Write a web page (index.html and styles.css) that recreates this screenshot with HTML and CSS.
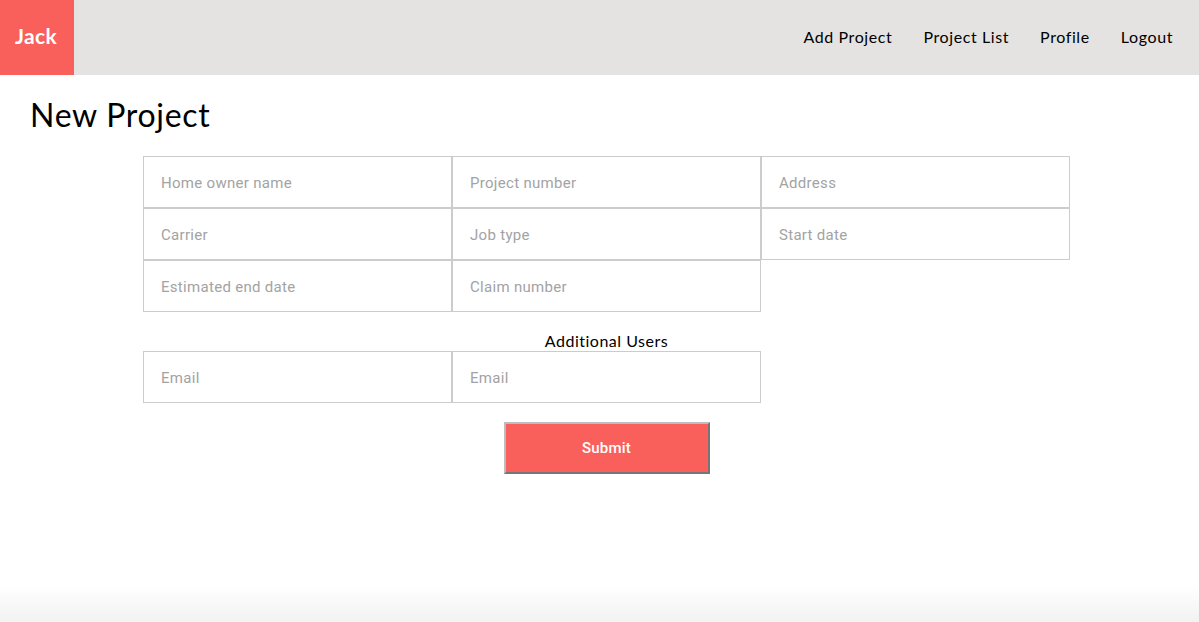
FILE: index.html
```html
<!DOCTYPE html>
<html lang="en">
<head>
<meta charset="utf-8">
<title>New Project</title>
<link rel="stylesheet" href="styles.css">
</head>
<body>
<header class="topbar">
  <div class="brand">Jack</div>
  <nav class="nav">
    <a href="#" class="nav-link">Add Project</a>
    <a href="#" class="nav-link">Project List</a>
    <a href="#" class="nav-link">Profile</a>
    <a href="#" class="nav-link">Logout</a>
  </nav>
</header>
<main class="main">
  <h1 class="title">New Project</h1>
  <form class="form">
    <div class="fields">
      <input class="field" type="text" placeholder="Home owner name">
      <input class="field" type="text" placeholder="Project number">
      <input class="field" type="text" placeholder="Address">
      <input class="field" type="text" placeholder="Carrier">
      <input class="field" type="text" placeholder="Job type">
      <input class="field" type="text" placeholder="Start date">
      <input class="field" type="text" placeholder="Estimated end date">
      <input class="field" type="text" placeholder="Claim number">
    </div>
    <div class="section-label">Additional Users</div>
    <div class="fields">
      <input class="field" type="email" placeholder="Email">
      <input class="field" type="email" placeholder="Email">
    </div>
    <div class="actions">
      <button class="submit" type="button">Submit</button>
    </div>
  </form>
</main>
<div class="fade"></div>
</body>
</html>
```
FILE: styles.css
```css
html, body {
  margin: 0;
  padding: 0;
  height: 100%;
}
body {
  font-family: Lato, "Open Sans", sans-serif;
  color: #000;
  background: #fff;
  position: relative;
  overflow: hidden;
}
.topbar {
  display: flex;
  align-items: stretch;
  height: 75px;
  background: #e5e3e1;
}
.brand {
  width: 74px;
  background: #f95f5b;
  color: #fff;
  font-size: 21px;
  font-weight: 700;
  letter-spacing: 0.3px;
  display: flex;
  align-items: center;
  justify-content: center;
  padding: 0 2px 4px 0;
  box-sizing: border-box;
}
.nav {
  margin-left: auto;
  display: flex;
  align-items: center;
  gap: 31px;
  padding-right: 26px;
  padding-bottom: 3px;
}
.nav-link {
  color: #000;
  text-decoration: none;
  font-size: 16px;
  letter-spacing: 0.6px;
}
.title {
  margin: 0;
  padding: 20px 0 0 30px;
  font-size: 32px;
  font-weight: 400;
  line-height: 40px;
  letter-spacing: 0.7px;
}
.form {
  width: 927px;
  margin: 21px 0 0 143px;
}
.fields {
  display: grid;
  grid-template-columns: 309px 309px 309px;
}
.field {
  height: 52px;
  box-sizing: border-box;
  border: 1px solid #cccccc;
  margin: 0;
  padding: 2px 16px 0 17px;
  font-family: Roboto, "Liberation Sans", sans-serif;
  font-size: 15px;
  letter-spacing: 0.3px;
  color: #333;
  outline: none;
  background: #fff;
}
.field::placeholder {
  color: #a3a3a3;
}
.section-label {
  text-align: center;
  font-size: 16px;
  letter-spacing: 0.5px;
  margin-top: 20px;
  line-height: 18px;
  padding-bottom: 1px;
}
.actions {
  display: flex;
  justify-content: center;
  margin-top: 19px;
}
.submit {
  width: 206px;
  height: 52px;
  background: #f95f5b;
  color: #fff;
  font-family: Roboto, "Liberation Sans", sans-serif;
  font-size: 15px;
  font-weight: 500;
  letter-spacing: 0.2px;
  border: 2px solid;
  border-color: #bdbdbd #767676 #767676 #bdbdbd;
  cursor: pointer;
}
.fade {
  position: absolute;
  left: 0;
  right: 0;
  bottom: 0;
  height: 36px;
  background: linear-gradient(to bottom, rgba(240,240,240,0), #f2f2f2);
  pointer-events: none;
}
```
